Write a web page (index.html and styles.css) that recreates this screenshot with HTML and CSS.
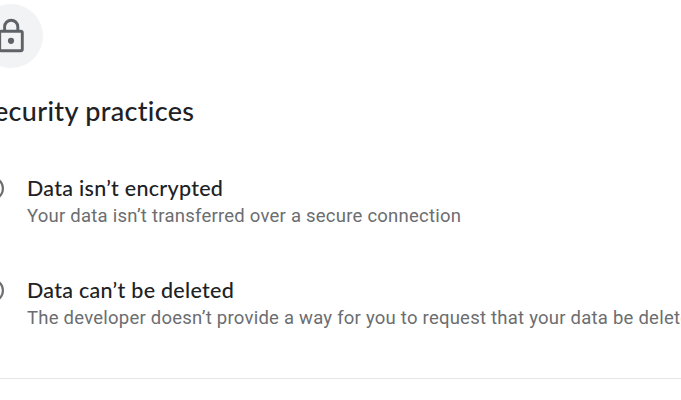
FILE: index.html
```html
<!DOCTYPE html>
<html lang="en">
<head>
  <meta charset="UTF-8">
  <meta name="viewport" content="width=device-width, initial-scale=1.0">
  <title>Security practices</title>
  <link rel="stylesheet" href="styles.css">
</head>
<body>
  <main class="security">
    <div class="badge">
      <svg width="28" height="36" viewBox="0 0 28 36" fill="none" stroke="#5f6368" stroke-width="2.9">
        <rect x="2.7" y="13.2" width="22.6" height="19.6" rx="1.6"/>
        <path d="M7.6 13V8.8a6.6 6.6 0 0 1 13.2 0V13"/>
        <circle cx="14" cy="22.8" r="3.1" fill="#5f6368" stroke="none"/>
      </svg>
    </div>

    <h1>Security practices</h1>

    <section class="practice">
      <svg class="icon" width="26" height="26" viewBox="0 0 26 26" fill="none" stroke="#6b6d70" stroke-width="2.2">
        <circle cx="13" cy="12.5" r="10.9"/>
        <path d="M13 7v7M13 16.5v2.5"/>
      </svg>
      <div>
        <h2>Data isn’t encrypted</h2>
        <p>Your data isn’t transferred over a secure connection</p>
      </div>
    </section>

    <section class="practice">
      <svg class="icon" width="26" height="26" viewBox="0 0 26 26" fill="none" stroke="#6b6d70" stroke-width="2.2">
        <circle cx="13" cy="12.5" r="10.9"/>
        <path d="M13 7v7M13 16.5v2.5"/>
      </svg>
      <div>
        <h2>Data can’t be deleted</h2>
        <p>The developer doesn’t provide a way for you to request that your data be deleted</p>
      </div>
    </section>
  </main>
</body>
</html>
```

FILE: styles.css
```css
body {
  margin: 0;
  background: #fff;
  overflow: hidden;
}

.security {
  width: 760px;
  margin-left: -21px;
  padding-top: 4px;
  height: 374px;
  border-bottom: 1px solid #e4e5e7;
}

.badge {
  display: flex;
  align-items: center;
  justify-content: center;
  width: 64px;
  height: 64px;
  border-radius: 50%;
  background: #f1f3f4;
}

h1, h2 {
  margin: 0;
  color: #202124;
  font-family: Lato, sans-serif;
  font-weight: 500;
  white-space: nowrap;
}

h1 {
  margin-top: 27px;
  font-size: 27px;
  line-height: 32px;
  letter-spacing: 0.32px;
}

.practice {
  display: flex;
  gap: 22px;
  height: 54px;
  margin-top: 48px;
}

h1 + .practice {
  margin-top: 49px;
}

.icon {
  flex: none;
}

h2 {
  font-size: 21.5px;
  line-height: 24px;
  letter-spacing: 0.28px;
}

p {
  margin: 2px 0 0;
  color: #6b6d70;
  font-family: Roboto, sans-serif;
  font-size: 18.5px;
  line-height: 28px;
  letter-spacing: 0.235px;
  white-space: nowrap;
}
```
